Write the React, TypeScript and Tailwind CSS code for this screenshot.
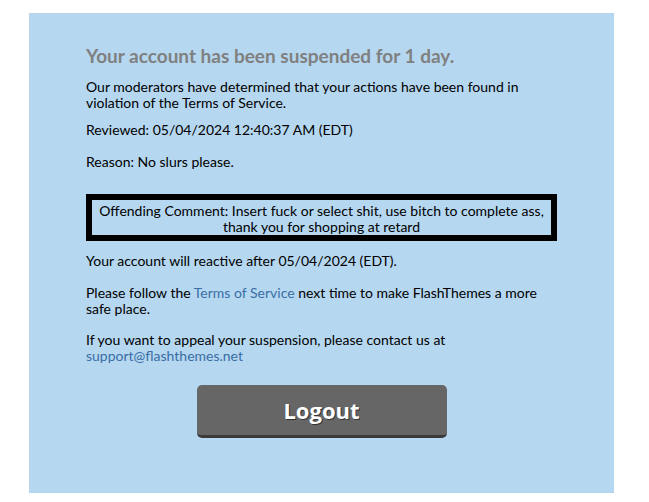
const App = () => {
  return (
    <div className="min-h-screen bg-white font-['Lato',sans-serif]">
      <div className="pt-[13px] pl-[29px]">
        <div className="w-[585px] h-[480px] bg-[#b5d7f0] px-[57px] pt-[32px] text-[14px] leading-[16px] text-black">
          <h1 className="text-[19px] leading-[22px] font-bold text-[#808080]">
            Your account has been suspended for 1 day.
          </h1>
          <p className="mt-[12px]">
            Our moderators have determined that your actions have been found in violation of the Terms of Service.
          </p>
          <p className="mt-[11px]">Reviewed: 05/04/2024 12:40:37 AM (EDT)</p>
          <p className="mt-[16px]">Reason: No slurs please.</p>
          <div className="mt-[24px] border-[6px] border-black pt-[3px] text-center">
            Offending Comment: Insert fuck or select shit, use bitch to complete ass, thank you for shopping at retard
          </div>
          <p className="mt-[12px]">Your account will reactive after 05/04/2024 (EDT).</p>
          <p className="mt-[16px]">
            Please follow the <span className="text-[#3a6ea5]">Terms of Service</span> next time to make
            FlashThemes a more safe place.
          </p>
          <p className="mt-[15px]">
            If you want to appeal your suspension, please contact us at{" "}
            <span className="text-[#3a6ea5]">support@flashthemes.net</span>
          </p>
          <div className="mt-[21px] flex justify-center">
            <button className="w-[250px] h-[53px] rounded-[5px] bg-[#666666] border-b-[3px] border-[#3a3a3a] font-['Open_Sans',sans-serif] text-[22px] font-bold text-white [text-shadow:1px_1px_0_#333]">
              Logout
            </button>
          </div>
        </div>
      </div>
    </div>
  );
};

export default App;
